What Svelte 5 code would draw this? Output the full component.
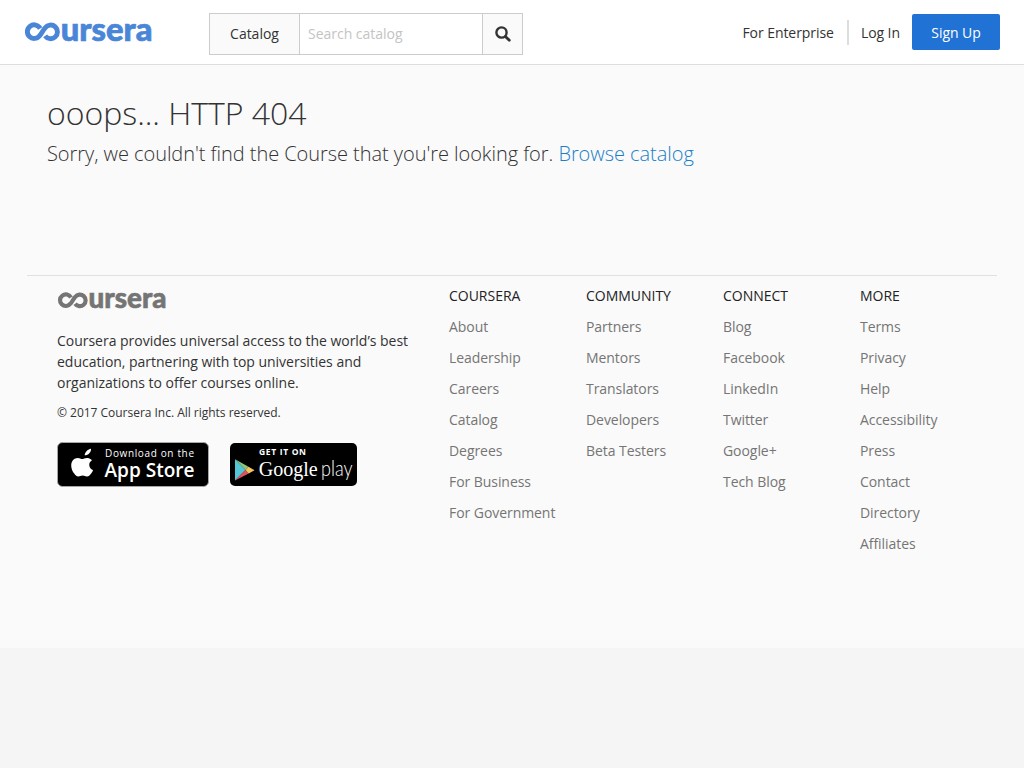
<script>
  const columns = [
    { title: 'COURSERA', links: ['About', 'Leadership', 'Careers', 'Catalog', 'Degrees', 'For Business', 'For Government'] },
    { title: 'COMMUNITY', links: ['Partners', 'Mentors', 'Translators', 'Developers', 'Beta Testers'] },
    { title: 'CONNECT', links: ['Blog', 'Facebook', 'LinkedIn', 'Twitter', 'Google+', 'Tech Blog'] },
    { title: 'MORE', links: ['Terms', 'Privacy', 'Help', 'Accessibility', 'Press', 'Contact', 'Directory', 'Affiliates'] }
  ];
</script>

{#snippet wordmark(color)}
  <svg class="wordmark" viewBox="0 0 128 20" fill={color} aria-label="coursera">
    <path d="M15.2 6.5A6.8 6.8 0 1 0 14.7 13.6C17 11 17.6 8.7 20.2 5.8A6.8 6.8 0 1 1 20.1 13.8" fill="none" stroke={color} stroke-width="4.9" />
    <text x="35.8" y="18.8" textLength="91.6" lengthAdjust="spacingAndGlyphs" stroke={color} stroke-width=".7">ursera</text>
  </svg>
{/snippet}

<header>
  <a class="logo" href="#home">{@render wordmark('#4a86d8')}</a>
  <form class="search">
    <button type="button" class="catalog">Catalog</button>
    <input type="text" placeholder="Search catalog" />
    <button type="button" class="find" aria-label="Search">
      <svg width="16" height="16" viewBox="0 0 16 16" fill="none" stroke="#333">
        <circle cx="6.5" cy="6.5" r="5.1" stroke-width="2.4" />
        <path d="M10.4 10.4L14.3 14.3" stroke-width="2.8" stroke-linecap="round" />
      </svg>
    </button>
  </form>
  <nav>
    <a class="enterprise" href="#enterprise">For Enterprise</a>
    <a class="login" href="#login">Log In</a>
    <a class="signup" href="#signup">Sign Up</a>
  </nav>
</header>

<main>
  <section class="message">
    <h1>ooops... HTTP 404</h1>
    <p>Sorry, we couldn't find the Course that you're looking for. <a href="#browse">Browse catalog</a></p>
  </section>

  <footer>
    <div class="about">
      <div class="footer-logo">{@render wordmark('#757575')}</div>
      <p class="mission">Coursera provides universal access to the world’s best education, partnering with top universities and organizations to offer courses online.</p>
      <p class="copyright">© 2017 Coursera Inc. All rights reserved.</p>
      <div class="stores">
        <svg width="152" height="45" viewBox="0 0 152 45" aria-label="Download on the App Store">
          <rect x=".5" y=".5" width="151" height="44" rx="5" fill="#000" stroke="#a6a6a6" />
          <g fill="#fff">
            <path transform="translate(-9.5 -1.2) scale(1.12 1.03)" d="M33.2 14.1c.1-3 2.4-5.8 5.6-6.5.4 3.2-2.4 6.4-5.6 6.5zM37.3 23.4c0-3 2.4-4.4 2.5-4.5-1.4-2-3.5-2.3-4.3-2.3-1.8-.2-3.6 1.1-4.5 1.1s-2.4-1.1-3.9-1.1c-2 0-3.9 1.2-4.9 2.9-2.1 3.7-.6 9.1 1.5 12.1 1 1.5 2.2 3.1 3.8 3.1 1.5-.1 2.1-1 3.9-1s2.3 1 3.9.9c1.7 0 2.7-1.5 3.7-2.9 1.2-1.7 1.7-3.3 1.7-3.4-.1 0-3.4-1.3-3.4-4.9z" />
            <text class="small" x="48" y="15" textLength="89">Download on the</text>
            <text class="store" x="47.5" y="35.3" textLength="90" lengthAdjust="spacingAndGlyphs">App Store</text>
          </g>
        </svg>
        <svg width="127" height="43" viewBox="0 0 127 43" aria-label="Get it on Google play">
          <rect width="127" height="43" rx="5" />
          <path d="M5 16.2L15.5 27 5 37.6z" fill="#54c6d8" />
          <path d="M5 16.2L18.5 23.7 15.5 27z" fill="#8cc878" />
          <path d="M5 37.6L15.5 27 18.7 30.4z" fill="#e2525e" />
          <path d="M18.5 23.7L24.5 27.2 18.7 30.4 15.5 27z" fill="#f3c65d" />
          <g fill="#fff">
            <text class="get" x="29" y="11.9" textLength="47">GET IT ON</text>
            <text class="google" x="28.7" y="33" textLength="59" lengthAdjust="spacingAndGlyphs">Google</text>
            <text class="play" x="91" y="33" textLength="31.5" lengthAdjust="spacingAndGlyphs">play</text>
          </g>
        </svg>
      </div>
    </div>
    {#each columns as column}
      <div class="column">
        <h2>{column.title}</h2>
        <ul>
          {#each column.links as link}
            <li><a href="#{link}">{link}</a></li>
          {/each}
        </ul>
      </div>
    {/each}
  </footer>
</main>

<style>
  :global(body) {
    background: #f5f5f5;
    font: 14px/21px "Open Sans", sans-serif;
    letter-spacing: -0.02px;
    color: #333;
    overflow: hidden;
  }
  a { color: inherit; text-decoration: none; }
  h1, h2, p, ul { margin: 0; padding: 0; font-weight: 400; }
  svg { display: block; flex: none; overflow: visible; letter-spacing: 0; }
  header {
    box-sizing: border-box;
    height: 65px;
    border-bottom: 1px solid #ddd;
    background: #fff;
    display: flex;
    align-items: flex-start;
    padding-right: 24px;
  }
  .logo { width: 128px; margin: 22px 56px 0 25px; }
  .wordmark { width: 100%; height: auto; }
  .wordmark text { font: 900 33px Lato, sans-serif; }
  .search {
    box-sizing: border-box;
    display: flex;
    width: 314px;
    height: 42px;
    margin-top: 13px;
    border: 1px solid #ccc;
  }
  .search button, .search input {
    font: inherit;
    letter-spacing: inherit;
    color: #333;
    border: 0;
    padding: 0 0 2px;
    margin: 0;
    border-radius: 0;
  }
  .search .catalog { width: 89px; background: #fafafa; }
  .search input {
    flex: 1;
    min-width: 0;
    padding-left: 8px;
    border: solid #ccc;
    border-width: 0 1px;
    background: #fff;
  }
  input::placeholder { color: #c4c4c4; opacity: 1; }
  .search .find {
    width: 39px;
    background: #fafafa;
    display: flex;
    align-items: center;
    justify-content: center;
    padding: 0;
  }
  nav { display: flex; align-items: center; margin: 14px 0 0 auto; letter-spacing: -0.06px; }
  .enterprise {
    line-height: 25px;
    padding-right: 13px;
    border-right: 2px solid #ddd;
    margin-right: 12px;
  }
  .login { margin-right: 12px; }
  .signup {
    width: 88px;
    height: 36px;
    line-height: 37px;
    text-align: center;
    border-radius: 2px;
    background: #2073d4;
    color: #fff;
  }
  main { height: 583px; background: #fafafa; }
  .message { height: 210px; box-sizing: border-box; padding: 25px 47px 0; }
  h1 { font-size: 32px; line-height: 45px; font-weight: 300; }
  .message p { font-size: 20px; line-height: 28px; margin-top: 5px; font-weight: 300; letter-spacing: -0.05px; }
  .message a { color: #1b7fc8; }
  footer {
    margin: 0 27px;
    border-top: 1px solid #e1e1e1;
    padding-left: 30px;
    display: flex;
  }
  .about { width: 392px; }
  .footer-logo { width: 109px; height: 18px; margin: 16px 0 0 1px; }
  .mission { width: 362px; margin-top: 20px; }
  .copyright { font-size: 12px; line-height: 18px; margin-top: 11px; }
  .stores { display: flex; align-items: center; gap: 21px; margin-top: 20px; }
  .small { font: 500 10px "Open Sans", sans-serif; }
  .store { font: 600 19.5px "Open Sans", sans-serif; }
  .get { font: 700 8.5px "Open Sans", sans-serif; }
  .google { font: 22px "Liberation Serif", serif; }
  .play { font: 300 21px Lato, sans-serif; }
  .column { width: 137px; padding-top: 9px; }
  h2 { font-size: 14px; line-height: 21px; color: #222; }
  ul { list-style: none; }
  li { margin-top: 10px; color: #757575; letter-spacing: -0.06px; }
</style>
